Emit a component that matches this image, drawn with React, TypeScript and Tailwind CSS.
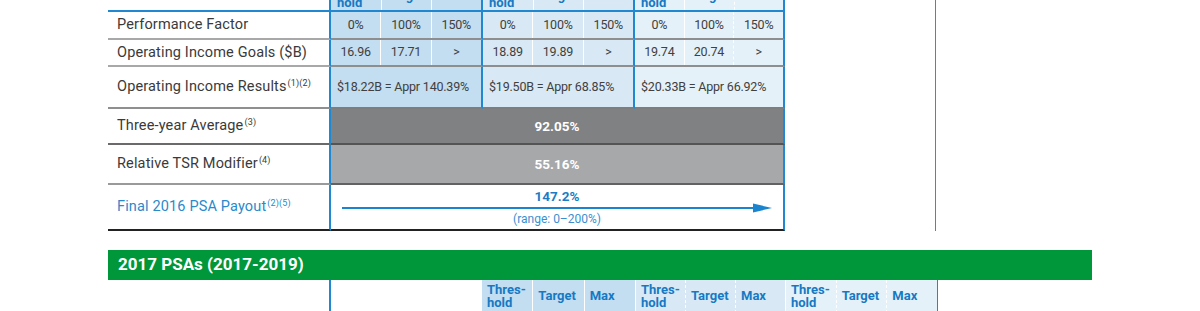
import React from 'react';

const groups = [
  { cls: 'w-[152px] bg-[#c3ddf1]', d2: 'border-l border-white' },
  { cls: 'w-[152px] bg-[#d8e9f5]', d2: 'border-l border-white' },
  { cls: 'w-[150px] bg-[#e4f1f8]', d2: 'border-l border-dashed border-white' },
];

function HeaderCells({ label }: { label: string }) {
  if (label === 'Thres-hold') {
    return (
      <div className="leading-[13px]">
        Thres-
        <br />
        hold
      </div>
    );
  }
  return <div className="leading-[13px]">{label}</div>;
}

function TopHeader() {
  return (
    <div className="flex h-[31px] -mt-[19px]">
      <div className="w-[223px] border-r-2 border-r-[#1f88d1] border-b-2 border-b-[#1f88d1]" />
      {groups.map((g, i) => (
        <div
          key={i}
          className={`${g.cls} flex border-r-2 border-r-[#1f88d1] border-b-2 border-b-[#1f88d1] text-[13px] font-bold text-[#1679c4]`}
        >
          <div className="flex-1 flex items-center pl-[6px]">
            <HeaderCells label="Thres-hold" />
          </div>
          <div className="flex-1 flex items-center pl-[5px] border-l border-white">
            <HeaderCells label="Target" />
          </div>
          <div className={`flex-1 flex items-center pl-[5px] ${g.d2}`}>
            <HeaderCells label="Max" />
          </div>
        </div>
      ))}
    </div>
  );
}

function ValueRow({ label, vals, h }: { label: React.ReactNode; vals: string[][]; h: string }) {
  return (
    <div className={`flex ${h}`}>
      <div className="w-[223px] border-r-2 border-r-[#1f88d1] border-b-2 border-b-[#a8a8a8] flex items-center pl-[9px] text-[14.5px] tracking-[0.15px] text-[#3a3a3a]">
        {label}
      </div>
      {groups.map((g, i) => (
        <div
          key={i}
          className={`${g.cls} flex border-r-2 border-r-[#1f88d1] border-b-2 border-b-[#8e8e8e] text-[12.5px] text-[#404040] tracking-[-0.2px]`}
        >
          <div className="flex-1 flex items-center justify-center">{vals[i][0]}</div>
          <div className="flex-1 flex items-center justify-center border-l border-white">{vals[i][1]}</div>
          <div className={`flex-1 flex items-center justify-center ${g.d2}`}>{vals[i][2]}</div>
        </div>
      ))}
    </div>
  );
}

function Sup({ children }: { children: React.ReactNode }) {
  return <sup className="text-[9px] ml-[1px] -top-[0.6em]">{children}</sup>;
}

export default function App() {
  return (
    <div
      className="w-[1200px] h-[311px] overflow-hidden bg-white"
      style={{ fontFamily: 'Roboto, "Liberation Sans", sans-serif' }}
    >
      <div className="flex pl-[108px]">
        <div className="w-[677px]">
          <TopHeader />
          <ValueRow
            h="h-[28px]"
            label="Performance Factor"
            vals={[
              ['0%', '100%', '150%'],
              ['0%', '100%', '150%'],
              ['0%', '100%', '150%'],
            ]}
          />
          <ValueRow
            h="h-[27px]"
            label="Operating Income Goals ($B)"
            vals={[
              ['16.96', '17.71', '>'],
              ['18.89', '19.89', '>'],
              ['19.74', '20.74', '>'],
            ]}
          />
          {/* Results */}
          <div className="flex h-[42px]">
            <div className="w-[223px] border-r-2 border-r-[#1f88d1] border-b-2 border-b-[#8f8f8f] flex items-center pl-[9px] text-[14.5px] tracking-[0.15px] text-[#3a3a3a]">
              <span>
                Operating Income Results<Sup>(1)(2)</Sup>
              </span>
            </div>
            {[
              '$18.22B = Appr 140.39%',
              '$19.50B = Appr 68.85%',
              '$20.33B = Appr 66.92%',
            ].map((t, i) => (
              <div
                key={i}
                className={`${groups[i].cls} flex items-center pl-[6px] border-r-2 border-r-[#1f88d1] border-b-2 border-b-[#7e7e7e] text-[12.5px] text-[#404040] tracking-[-0.2px]`}
              >
                {t}
              </div>
            ))}
          </div>
          {/* Three-year */}
          <div className="flex h-[36px]">
            <div className="w-[223px] border-r-2 border-r-[#1f88d1] border-b-2 border-b-[#6a6a6a] flex items-center pl-[9px] text-[14.5px] tracking-[0.15px] text-[#3a3a3a]">
              <span>
                Three-year Average<Sup>(3)</Sup>
              </span>
            </div>
            <div className="w-[454px] bg-[#808183] border-r-2 border-r-[#1f88d1] border-b-2 border-b-[#545454] flex items-center justify-center text-[13.5px] font-bold text-white">
              92.05%
            </div>
          </div>
          {/* Relative TSR */}
          <div className="flex h-[40px]">
            <div className="w-[223px] border-r-2 border-r-[#1f88d1] border-b-2 border-b-[#9a9a9a] flex items-center pl-[9px] text-[14.5px] tracking-[0.15px] text-[#3a3a3a]">
              <span>
                Relative TSR Modifier<Sup>(4)</Sup>
              </span>
            </div>
            <div className="w-[454px] bg-[#a7a8aa] border-r-2 border-r-[#1f88d1] border-b-2 border-b-[#626262] flex items-center justify-center text-[13.5px] font-bold text-white">
              55.16%
            </div>
          </div>
          {/* Final */}
          <div className="flex h-[46px]">
            <div className="w-[223px] border-r-2 border-r-[#1f88d1] border-b-2 border-b-[#222222] flex items-center pl-[9px] text-[14.5px] tracking-[0.15px] text-[#2a89cb]">
              <span>
                Final 2016 PSA Payout<Sup>(2)(5)</Sup>
              </span>
            </div>
            <div className="w-[454px] bg-white border-r-2 border-r-[#1f88d1] border-b-2 border-b-[#222222] flex flex-col items-center pt-[4px]">
              <div className="leading-[14px] text-[13.5px] font-bold text-[#1a7dc4]">147.2%</div>
              <svg width="430" height="10" viewBox="0 0 430 10" className="block">
                <line x1="0" y1="5" x2="414" y2="5" stroke="#1a84cf" strokeWidth="2" />
                <polygon points="411,0.5 430,5 411,9.5" fill="#1a84cf" />
              </svg>
              <div className="leading-[13px] text-[12px] text-[#3b8fcf]">(range: 0–200%)</div>
            </div>
          </div>
        </div>
        <div className="w-[151px] -mt-[19px] border-r border-r-[#2f8fd4]" />
      </div>

      {/* Green bar */}
      <div className="ml-[108px] mt-[19px] w-[984px] h-[30px] bg-[#00963a] flex items-center pl-[10px] text-[17px] font-bold text-white">
        2017 PSAs (2017-2019)
      </div>

      {/* Bottom header */}
      <div className="flex pl-[108px] h-[33px]">
        <div className="w-[223px] border-r-2 border-r-[#1f88d1]" />
        <div className="w-[151px]" />
        {[
          { cls: 'w-[153px] bg-[#c3ddf1]', d: 'border-l border-white' },
          { cls: 'w-[150px] bg-[#d8e9f5] border-l border-l-white', d: 'border-l border-dashed border-white' },
          { cls: 'w-[153px] bg-[#e4f1f8] border-l border-l-white border-r border-r-[#1f88d1]', d: 'border-l border-dashed border-white' },
        ].map((g, i) => (
          <div key={i} className={`${g.cls} flex text-[13px] font-bold text-[#1679c4]`}>
            <div className="flex-1 flex items-center pl-[5px] pb-[2px]">
              <HeaderCells label="Thres-hold" />
            </div>
            <div className={`flex-1 flex items-center pl-[5px] pb-[2px] ${g.d}`}>
              <HeaderCells label="Target" />
            </div>
            <div className={`flex-1 flex items-center pl-[5px] pb-[2px] ${g.d}`}>
              <HeaderCells label="Max" />
            </div>
          </div>
        ))}
      </div>
    </div>
  );
}
